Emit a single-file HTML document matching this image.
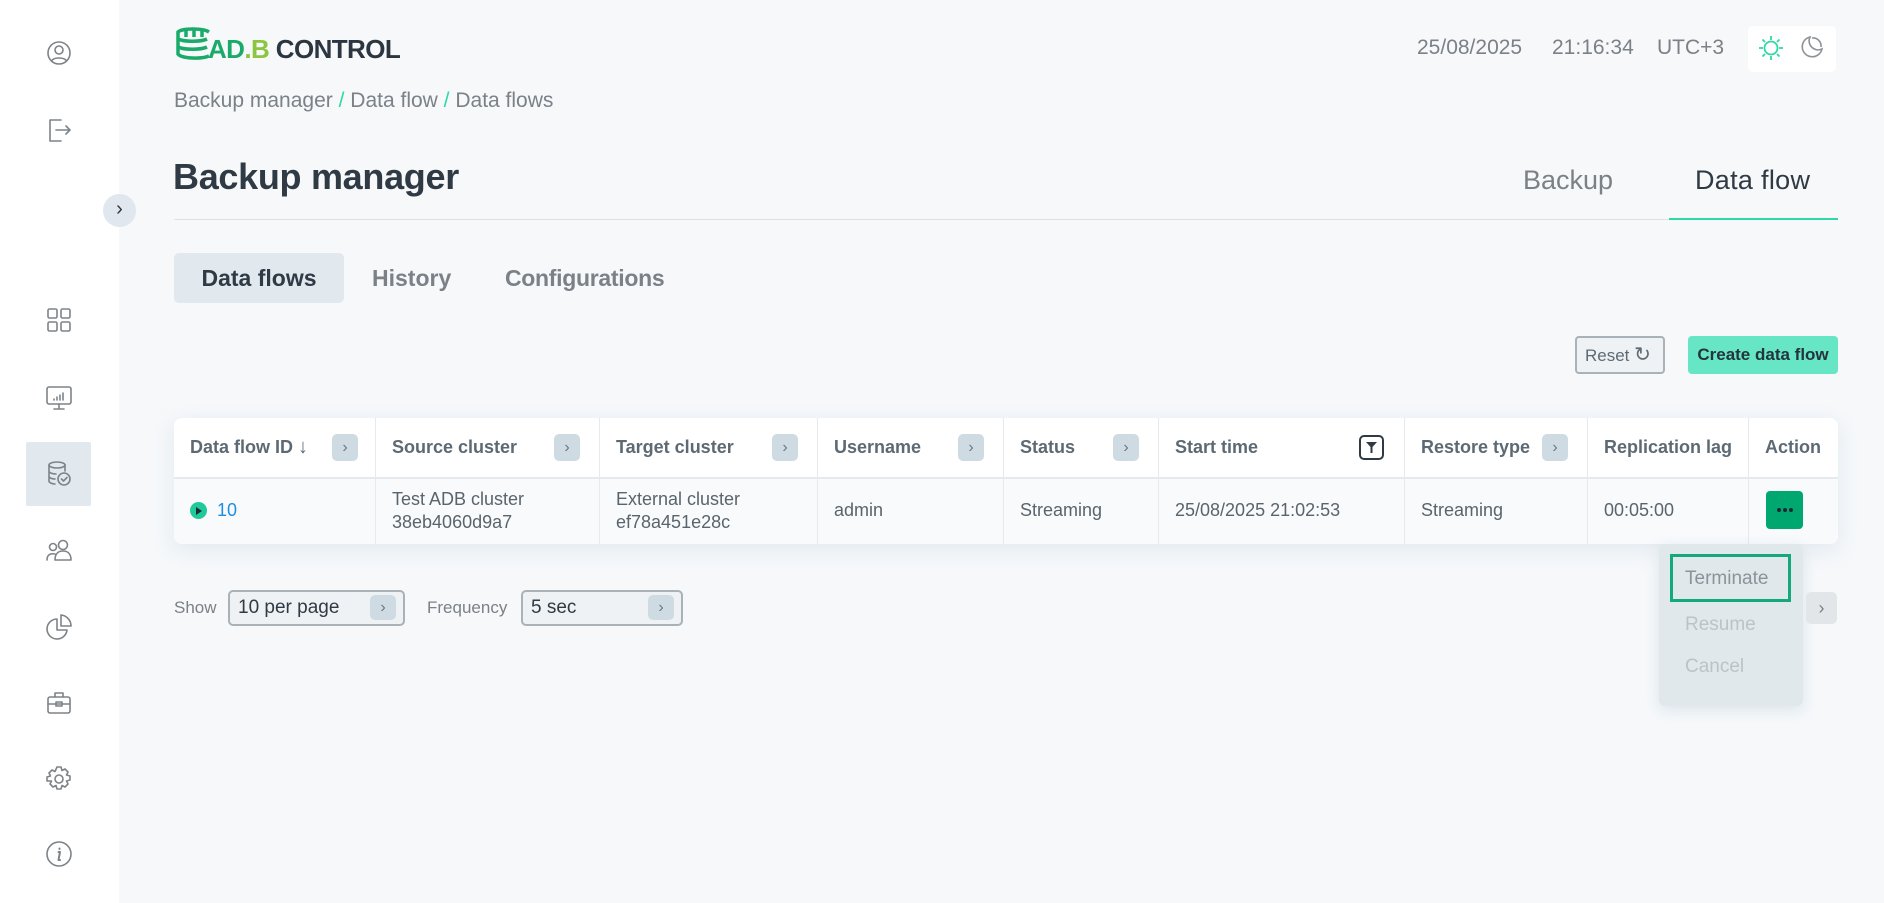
<!DOCTYPE html>
<html><head><meta charset="utf-8"><style>
*{box-sizing:border-box;margin:0;padding:0}
body{width:1884px;height:903px;overflow:hidden;background:#f6f8fa;font-family:"Liberation Sans",sans-serif;color:#2f3a45;position:relative}
.abs{position:absolute}
.side{left:0;top:0;width:119px;height:903px;background:#fff}
.ic{position:absolute;left:44px;width:30px;height:30px}
.ic svg{width:30px;height:30px;fill:none;stroke:#7c8389;stroke-width:1.6;stroke-linecap:round;stroke-linejoin:round}
.txtg{color:#7b8187}
.th{position:absolute;top:0;height:59px;line-height:59px;font-size:18px;color:#5d6a74;font-weight:bold;padding-left:16px;border-right:1px solid #e6eaed}
.td{position:absolute;top:59px;height:67px;font-size:18px;color:#5a646c;padding-left:16px;border-right:1px solid #e6eaed;display:flex;flex-direction:column;justify-content:center;line-height:23px}
.chev{position:absolute;width:26px;height:27px;background:#cfdbe2;border-radius:5px;top:16px;color:#6a7782;font-size:16px;line-height:27px;text-align:center;font-weight:normal}
</style></head><body>
<div class="abs side">
 <div class="ic" style="top:38px"><svg viewBox="0 0 30 30"><circle cx="15" cy="15" r="11"/><circle cx="15" cy="12" r="4"/><path d="M7.5 23c2-4 13-4 15 0"/></svg></div>
 <div class="ic" style="top:115px"><svg viewBox="0 0 30 30"><path d="M17 5H6v21h11M12 15h14M22 11l4 4-4 4"/></svg></div>
 <div class="ic" style="top:305px"><svg viewBox="0 0 30 30"><rect x="4" y="4" width="9" height="9" rx="1.5"/><rect x="17" y="4" width="9" height="9" rx="1.5"/><rect x="4" y="17" width="9" height="9" rx="1.5"/><rect x="17" y="17" width="9" height="9" rx="1.5"/></svg></div>
 <div class="ic" style="top:383px"><svg viewBox="0 0 30 30"><rect x="3" y="4" width="24" height="17" rx="2"/><path d="M10 26h10M15 21v5M10 17v-1M13 17v-3M16 17v-5M19 17v-7"/></svg></div>
 <div class="abs" style="left:26px;top:442px;width:65px;height:64px;background:#e1e8ee;border-radius:2px"></div>
 <div class="ic" style="top:459px"><svg viewBox="0 0 30 30"><ellipse cx="13" cy="6" rx="8" ry="3"/><path d="M5 6v16c0 2 4 3 6 3M21 6v6M5 12c0 2 4 3 7 3M5 17c0 2 3 3 6 3"/><circle cx="20" cy="20" r="6"/><path d="M17.5 20l2 2 3.5-3.5"/></svg></div>
 <div class="ic" style="top:536px"><svg viewBox="0 0 30 30"><circle cx="9" cy="11" r="3.5"/><circle cx="19" cy="9" r="4.5"/><path d="M3 24c0-5 3-7 8-6M11 24c0-6 3-9 8-9s8 3 8 9z"/></svg></div>
 <div class="ic" style="top:612px"><svg viewBox="0 0 30 30"><path d="M13 7a10 10 0 1 0 10 11H13z"/><path d="M17 3v11h10A11 11 0 0 0 17 3z"/></svg></div>
 <div class="ic" style="top:688px"><svg viewBox="0 0 30 30"><rect x="4" y="9" width="22" height="16" rx="2"/><path d="M11 9V5h8v4M4 16h22"/><rect x="12" y="14" width="6" height="4"/></svg></div>
 <div class="ic" style="top:764px"><svg viewBox="0 0 30 30"><circle cx="15" cy="15" r="4"/><path d="M13 3h4l1 3.5 3-1.5 3 3-1.5 3 3.5 1v4l-3.5 1 1.5 3-3 3-3-1.5-1 3.5h-4l-1-3.5-3 1.5-3-3 1.5-3L3 17v-4l3.5-1L5 9l3-3 3 1.5z"/></svg></div>
 <div class="ic" style="top:839px"><svg viewBox="0 0 30 30"><circle cx="15" cy="15" r="12"/><path d="M15.5 9.5v.5M14.5 13h1.5l-1.5 8h1.5" stroke-width="2"/></svg></div>
</div>
<div class="abs" style="left:103px;top:194px;width:33px;height:33px;border-radius:50%;background:#e0e7ee;text-align:center;line-height:31px;font-size:20px;color:#333">›</div>

<!-- logo -->
<svg class="abs" style="left:174px;top:27px" width="40" height="36" viewBox="0 0 40 36"><g fill="none" stroke="#1aab6a" stroke-width="3.5"><path d="M35 5C29 1 8 1 4 5v22c4 5 24 5 31 2"/><path d="M4 12c6 3 23 3 29 0M4 20c6 3 23 3 29 0"/><path d="M12 3v7M20 2v8M28 3v7"/></g></svg>
<div class="abs" style="left:208px;top:34px;font-size:26px;font-weight:bold;letter-spacing:-0.6px"><span style="color:#1aab6a">AD</span><span style="color:#8cc63f">.B</span><span style="color:#2b3640"> CONTROL</span></div>
<div class="abs txtg" style="left:1417px;top:36px;font-size:21px">25/08/2025</div>
<div class="abs txtg" style="left:1552px;top:36px;font-size:21px">21:16:34</div>
<div class="abs txtg" style="left:1657px;top:36px;font-size:21px">UTC+3</div>
<div class="abs" style="left:1748px;top:26px;width:88px;height:46px;background:#fff;border-radius:5px"></div>
<svg class="abs" style="left:1756px;top:33px" width="30" height="30" viewBox="0 0 30 30" fill="none" stroke="#2ed8a8" stroke-width="1.8"><circle cx="15" cy="15" r="6.5"/><path d="M15 3v4M15 23v4M3 15h4M23 15h4M6.5 6.5l2.5 2.5M21 21l2.5 2.5M6.5 23.5L9 21M21 9l2.5-2.5"/></svg>
<svg class="abs" style="left:1798px;top:33px" width="28" height="28" viewBox="0 0 28 28" fill="none" stroke="#8d9297" stroke-width="1.6"><path d="M12 4a10 10 0 1 0 12 12A9 9 0 0 1 12 4z"/><path d="M14 5a8 8 0 0 1 9 9"/></svg>

<div class="abs" style="left:174px;top:89px;font-size:21px;color:#7b8187">Backup manager <span style="color:#2ed8a8">/</span> Data flow <span style="color:#2ed8a8">/</span> Data flows</div>
<div class="abs" style="left:173px;top:156px;font-size:36px;font-weight:bold;color:#2f3a45;letter-spacing:-0.3px">Backup manager</div>
<div class="abs" style="left:1523px;top:165px;font-size:27px;color:#7b8187">Backup</div>
<div class="abs" style="left:1695px;top:165px;font-size:27px;color:#2f3a45;letter-spacing:0.3px">Data flow</div>
<div class="abs" style="left:174px;top:219px;width:1664px;height:1px;background:#dde2e6"></div>
<div class="abs" style="left:1669px;top:218px;width:169px;height:2px;background:#2ed8a8"></div>

<div class="abs" style="left:174px;top:253px;width:170px;height:50px;background:#e1e8ee;border-radius:5px;text-align:center;line-height:50px;font-size:23px;font-weight:bold;color:#2f3a45">Data flows</div>
<div class="abs" style="left:372px;top:265px;font-size:23px;font-weight:bold;color:#7b8187">History</div>
<div class="abs" style="left:505px;top:265px;font-size:23px;font-weight:bold;color:#7b8187;letter-spacing:-0.3px">Configurations</div>

<div class="abs" style="left:1575px;top:336px;width:90px;height:38px;border:2px solid #a9b2b9;border-radius:4px;background:#eef2f5;font-size:17px;color:#5d6a74;line-height:34px;padding-left:8px">Reset <span style="font-size:20px">↻</span></div>
<div class="abs" style="left:1688px;top:336px;width:150px;height:38px;background:#66e6c4;border-radius:4px;font-size:17px;font-weight:bold;color:#24343c;line-height:38px;text-align:center">Create data flow</div>

<div class="abs" style="left:174px;top:418px;width:1664px;height:126px;background:#fff;border-radius:8px;box-shadow:0 6px 20px rgba(180,200,215,.3);overflow:hidden">
 <div class="abs" style="left:0;top:59px;width:1664px;height:67px;background:#f8fafc;border-top:2px solid #e6eaed"></div>
 <div class="th" style="left:0;width:202px">Data flow ID <span style="font-weight:normal;font-size:20px">↓</span><div class="chev" style="left:158px">›</div></div>
 <div class="th" style="left:202px;width:224px">Source cluster<div class="chev" style="left:178px">›</div></div>
 <div class="th" style="left:426px;width:218px">Target cluster<div class="chev" style="left:172px">›</div></div>
 <div class="th" style="left:644px;width:186px">Username<div class="chev" style="left:140px">›</div></div>
 <div class="th" style="left:830px;width:155px">Status<div class="chev" style="left:109px">›</div></div>
 <div class="th" style="left:985px;width:246px">Start time<div class="abs" style="left:200px;top:17px;width:25px;height:25px;border:2px solid #2f3a45;border-radius:5px"><svg width="21" height="21" viewBox="0 0 21 21" style="position:absolute;left:0;top:0"><path d="M5 5h11l-4.5 5v6h-2v-6z" fill="#2f3a45"/></svg></div></div>
 <div class="th" style="left:1231px;width:183px">Restore type<div class="chev" style="left:137px">›</div></div>
 <div class="th" style="left:1414px;width:161px">Replication lag</div>
 <div class="th" style="left:1575px;width:89px;border:none">Action</div>
 <div class="td" style="left:0;width:202px;flex-direction:row;justify-content:flex-start;align-items:center"><span style="display:inline-block;width:17px;height:17px;border-radius:50%;background:#1fc99a;position:relative;margin-right:10px"><span style="position:absolute;left:6px;top:4.5px;border-left:6px solid #1d2a33;border-top:4px solid transparent;border-bottom:4px solid transparent"></span></span><span style="color:#1e8fe0">10</span></div>
 <div class="td" style="left:202px;width:224px"><div>Test ADB cluster</div><div>38eb4060d9a7</div></div>
 <div class="td" style="left:426px;width:218px"><div>External cluster</div><div>ef78a451e28c</div></div>
 <div class="td" style="left:644px;width:186px">admin</div>
 <div class="td" style="left:830px;width:155px">Streaming</div>
 <div class="td" style="left:985px;width:246px">25/08/2025 21:02:53</div>
 <div class="td" style="left:1231px;width:183px">Streaming</div>
 <div class="td" style="left:1414px;width:161px">00:05:00</div>
 <div class="abs" style="left:1592px;top:73px;width:37px;height:38px;background:#00a870;border-radius:4px">
  <span class="abs" style="left:11px;top:17px;width:4px;height:4px;border-radius:50%;background:#1d2a33"></span>
  <span class="abs" style="left:17px;top:17px;width:4px;height:4px;border-radius:50%;background:#1d2a33"></span>
  <span class="abs" style="left:23px;top:17px;width:4px;height:4px;border-radius:50%;background:#1d2a33"></span>
 </div>
</div>

<div class="abs txtg" style="left:174px;top:598px;font-size:17px">Show</div>
<div class="abs" style="left:228px;top:590px;width:177px;height:36px;border:2px solid #a9b2b9;border-radius:5px;background:#eef2f5;font-size:19px;line-height:32px;padding-left:8px;color:#2f3a45">10 per page<div class="chev" style="left:140px;top:3px;height:25px;line-height:25px">›</div></div>
<div class="abs txtg" style="left:427px;top:598px;font-size:17px">Frequency</div>
<div class="abs" style="left:521px;top:590px;width:162px;height:36px;border:2px solid #a9b2b9;border-radius:5px;background:#eef2f5;font-size:19px;line-height:32px;padding-left:8px;color:#2f3a45">5 sec<div class="chev" style="left:125px;top:3px;height:25px;line-height:25px">›</div></div>

<div class="abs" style="left:1659px;top:544px;width:144px;height:162px;background:#e1e8ec;border-radius:6px;box-shadow:0 4px 14px rgba(180,200,215,.4)"></div>
<div class="abs" style="left:1670px;top:554px;width:121px;height:48px;border:3px solid #14a97a;font-size:19px;color:#8a9399;line-height:44px;padding-left:12px">Terminate</div>
<div class="abs" style="left:1685px;top:614px;font-size:19px;color:#bcc3c8">Resume</div>
<div class="abs" style="left:1685px;top:656px;font-size:19px;color:#bcc3c8">Cancel</div>
<div class="abs" style="left:1806px;top:592px;width:31px;height:32px;background:#e2e6e9;border-radius:5px;color:#7b8187;text-align:center;line-height:32px;font-size:18px">›</div>
</body></html>
